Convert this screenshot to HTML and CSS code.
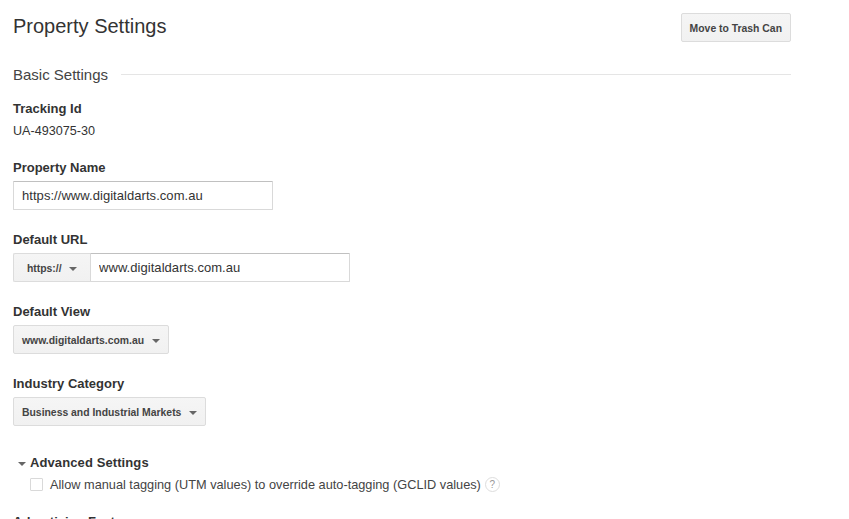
FILE: index.html
```html
<!DOCTYPE html>
<html lang="en">
<head>
  <meta charset="UTF-8" />
  <meta name="viewport" content="width=device-width, initial-scale=1" />
  <title>Property Settings</title>
  <link rel="stylesheet" href="styles.css">
</head>
<body>
  <div class="page">
    <div class="page-head">
      <h1 class="page-title">Property Settings</h1>
      <button class="btn" type="button">Move to Trash Can</button>
    </div>

    <div class="section-head">
      <span class="section-title">Basic Settings</span>
      <span class="section-rule"></span>
    </div>

    <div class="field field-tracking">
      <div class="label">Tracking Id</div>
      <div class="value">UA-493075-30</div>
    </div>

    <div class="field field-name">
      <div class="label">Property Name</div>
      <input class="input input-name" type="text" value="https://www.digitaldarts.com.au" />
    </div>

    <div class="field">
      <div class="label">Default URL</div>
      <div class="url-group">
        <button class="btn btn-select btn-scheme" type="button">https:// <span class="caret"></span></button>
        <input class="input input-url" type="text" value="www.digitaldarts.com.au" />
      </div>
    </div>

    <div class="field">
      <div class="label">Default View</div>
      <button class="btn btn-select" type="button">www.digitaldarts.com.au <span class="caret"></span></button>
    </div>

    <div class="field">
      <div class="label">Industry Category</div>
      <button class="btn btn-select" type="button">Business and Industrial Markets <span class="caret"></span></button>
    </div>

    <div class="advanced">
      <div class="advanced-head"><span class="caret caret-small"></span>Advanced Settings</div>
      <label class="check-row">
        <input class="check" type="checkbox" />
        <span>Allow manual tagging (UTM values) to override auto-tagging (GCLID values)</span>
        <span class="help">?</span>
      </label>
    </div>

    <div class="label label-cut">Advertising Features</div>
  </div>
</body>
</html>
```

FILE: styles.css
```css
html, body {
  margin: 0;
  padding: 0;
  height: 100vh;
  overflow: hidden;
  background: #fff;
  font-family: "Liberation Sans", Arial, sans-serif;
  font-size: 12.75px;
  color: #333;
}
.page {
  width: 778px;
  padding: 13px 0 0 13px;
}
.page-head {
  display: flex;
  justify-content: space-between;
  align-items: flex-start;
}
.page-title {
  margin: 0;
  font-size: 20px;
  font-weight: 400;
  line-height: 26px;
}
.btn {
  height: 29px;
  padding: 1px 8px 0;
  border: 1px solid #dcdcdc;
  border-radius: 2px;
  background: linear-gradient(180deg, #f5f5f5 0%, #f1f1f1 100%);
  font-family: inherit;
  font-size: 10.4px;
  font-weight: 700;
  color: #444;
  cursor: pointer;
}
.section-head {
  display: flex;
  align-items: center;
  gap: 13px;
  margin-top: 15px;
  height: 35px;
}
.section-title {
  font-size: 15px;
  color: #444;
}
.section-rule {
  flex: 1;
  height: 1px;
  background: #e5e5e5;
}
.field {
  margin-top: 22px;
}
.field-tracking {
  margin-top: 9px;
}
.field-name {
  margin-top: 21px;
}
.label {
  font-size: 13px;
  font-weight: 700;
  line-height: 16px;
  color: #333;
}
.value {
  margin-top: 6px;
  font-size: 12.6px;
  line-height: 16px;
}
.input {
  display: block;
  box-sizing: border-box;
  height: 29px;
  margin: 0;
  padding: 0 8px;
  border: 1px solid #d9d9d9;
  border-top-color: #c0c0c0;
  border-radius: 1px;
  font-family: inherit;
  font-size: 13px;
  letter-spacing: 0.05px;
  color: #333;
  outline: none;
}
.input-name {
  width: 260px;
  margin-top: 5px;
}
.url-group {
  display: flex;
  margin-top: 5px;
}
.btn-select {
  display: block;
  margin-top: 5px;
}
.btn-scheme {
  width: 77px;
  margin-top: 0;
  border-right: 0;
  border-radius: 2px 0 0 2px;
}
.input-url {
  width: 260px;
}
.caret {
  display: inline-block;
  width: 0;
  height: 0;
  margin-left: 4.6px;
  vertical-align: middle;
  border-top: 4px solid #666;
  border-left: 4px solid transparent;
  border-right: 4px solid transparent;
}
.caret-small {
  margin: 0 4px 0 5px;
}
.advanced {
  margin-top: 29px;
}
.advanced-head {
  font-size: 13px;
  font-weight: 700;
  line-height: 16px;
  letter-spacing: 0.1px;
}
.check-row {
  display: flex;
  align-items: center;
  gap: 7px;
  margin: 4px 0 0 17px;
  height: 18px;
  color: #444;
}
.check {
  appearance: none;
  width: 13px;
  height: 13px;
  margin: 0;
  border: 1px solid #d9d9d9;
  border-radius: 1px;
  background: #fff;
}
.help {
  display: flex;
  align-items: center;
  justify-content: center;
  box-sizing: border-box;
  width: 15px;
  height: 15px;
  margin-left: -3px;
  border: 1px solid #ddd;
  border-radius: 50%;
  font-size: 10px;
  color: #999;
}
.label-cut {
  margin-top: 21px;
}
```
